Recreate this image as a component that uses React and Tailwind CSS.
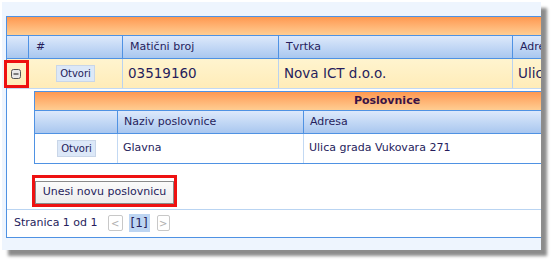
import React from 'react';

// Master grid columns
const columns = [
  { id: 'expand', label: '', width: 'w-[22px]' },
  { id: 'num', label: '#', width: 'w-[94px]' },
  { id: 'mb', label: 'Matični broj', width: 'w-[156px]' },
  { id: 'tvrtka', label: 'Tvrtka', width: 'w-[234px]' },
  { id: 'adresa', label: 'Adresa', width: 'w-[200px]' },
];

const OpenButton = () => (
  <span className="inline-flex h-[17px] items-center border border-[#c9d6e8] bg-[#dce8f8] px-[3px] text-[10px] leading-none text-[#1f1d5a]">
    Otvori
  </span>
);

const MinusIcon = () => (
  <svg width="10" height="10" viewBox="0 0 10 10">
    <rect x="0.5" y="0.5" width="9" height="9" rx="2" fill="#e8e8e8" stroke="#555" />
    <line x1="2.5" y1="5" x2="7.5" y2="5" stroke="#333" strokeWidth="1.2" />
  </svg>
);

const App = () => {
  return (
    <div className="h-[265px] w-[555px] bg-white pl-[2px] pt-[2px] font-['DejaVu_Sans',Verdana,sans-serif] text-[#261d5c]">
      <div className="h-[248px] w-[539px] overflow-hidden bg-[#eef5fe] pl-[4px] pt-[14px] shadow-[6px_6px_3px_rgba(0,0,0,0.45)]">
        {/* Master grid */}
        <div className="w-[760px] border-y border-l border-[#4f92e3] bg-white">
          <div className="h-[19px] border-b border-[#4f92e3] bg-gradient-to-b from-[#fe9850] to-[#ffcd92]" />

          {/* Column headers */}
          <div className="flex h-[23px] border-b border-[#4f92e3] bg-gradient-to-b from-[#dde9fb] to-[#a9c7ef] text-[11px]">
            {columns.map((col) => (
              <div
                key={col.id}
                className={`${col.width} flex shrink-0 items-center border-r border-[#4f92e3] pl-[7px]`}
              >
                {col.label}
              </div>
            ))}
          </div>

          {/* Data row */}
          <div className="flex h-[30px] border-b border-[#c3d9f3] bg-gradient-to-b from-[#fff4cf] to-[#ffecb8]">
            <div className="relative flex w-[22px] shrink-0 items-center pl-[4px] pt-[1px]">
              <MinusIcon />
              <div className="absolute left-[-3px] top-[1px] h-[28px] w-[25px] border-[3px] border-[#ee1111]" />
            </div>
            <div className="flex w-[94px] shrink-0 items-center justify-center border-r border-[#b9d2f0]">
              <OpenButton />
            </div>
            <div className="flex w-[156px] shrink-0 items-center border-r border-[#b9d2f0] pl-[5px] text-[13.5px]">
              03519160
            </div>
            <div className="flex w-[234px] shrink-0 items-center border-r border-[#b9d2f0] pl-[5px] text-[13.5px]">
              Nova ICT d.o.o.
            </div>
            <div className="flex w-[200px] shrink-0 items-center pl-[5px] text-[13.5px]">
              Ulica grada Vukovara 271
            </div>
          </div>

          {/* Detail row */}
          <div className="pl-[27px] pt-[2px]">
            <div className="w-[705px] border-y border-l border-[#4f92e3]">
              <div className="flex h-[19px] items-center justify-center border-b border-[#4f92e3] bg-gradient-to-b from-[#fe9850] to-[#ffcd92] text-[11px] font-bold text-[#3a1245]">
                Poslovnice
              </div>
              <div className="flex h-[23px] border-b border-[#4f92e3] bg-gradient-to-b from-[#dde9fb] to-[#a9c7ef] text-[11px]">
                <div className="w-[83px] shrink-0 border-r border-[#4f92e3]" />
                <div className="flex w-[186px] shrink-0 items-center border-r border-[#4f92e3] pl-[6px]">
                  Naziv poslovnice
                </div>
                <div className="flex items-center pl-[6px]">Adresa</div>
              </div>
              <div className="flex h-[29px] bg-white text-[11px]">
                <div className="flex w-[83px] shrink-0 items-center justify-center border-r border-[#c3d9f3] pl-[1px]">
                  <OpenButton />
                </div>
                <div className="flex w-[186px] shrink-0 items-center border-r border-[#c3d9f3] pl-[5px]">
                  Glavna
                </div>
                <div className="flex items-center pl-[5px]">Ulica grada Vukovara 271</div>
              </div>
            </div>

            <div className="pb-[2px] pt-[11px]">
              <div className="ml-[-2px] w-fit border-[3px] border-[#ee1111]">
                <button className="h-[23px] w-[139px] border border-[#8a8a8a] bg-gradient-to-b from-[#fbfbfb] to-[#ececec] text-[11px] text-[#261d5c]">
                  Unesi novu poslovnicu
                </button>
              </div>
            </div>
          </div>

          {/* Pager */}
          <div className="flex h-[28px] items-center border-t border-[#b9d4f2] pl-[7px] text-[11px]">
            <span>Stranica 1 od 1</span>
            <span className="ml-[10px] flex h-[16px] w-[15px] items-center justify-center rounded-[2px] border border-[#c8c8c8] text-[10px] text-[#b0b0b0]">
              &lt;
            </span>
            <span className="ml-[6px] flex h-[18px] items-center bg-[#bdd5f2] px-[2px] text-[12px]">[1]</span>
            <span className="ml-[7px] flex h-[16px] w-[13px] items-center justify-center rounded-[2px] border border-[#c8c8c8] text-[10px] text-[#b0b0b0]">
              &gt;
            </span>
          </div>
        </div>
      </div>
    </div>
  );
};

export default App;
